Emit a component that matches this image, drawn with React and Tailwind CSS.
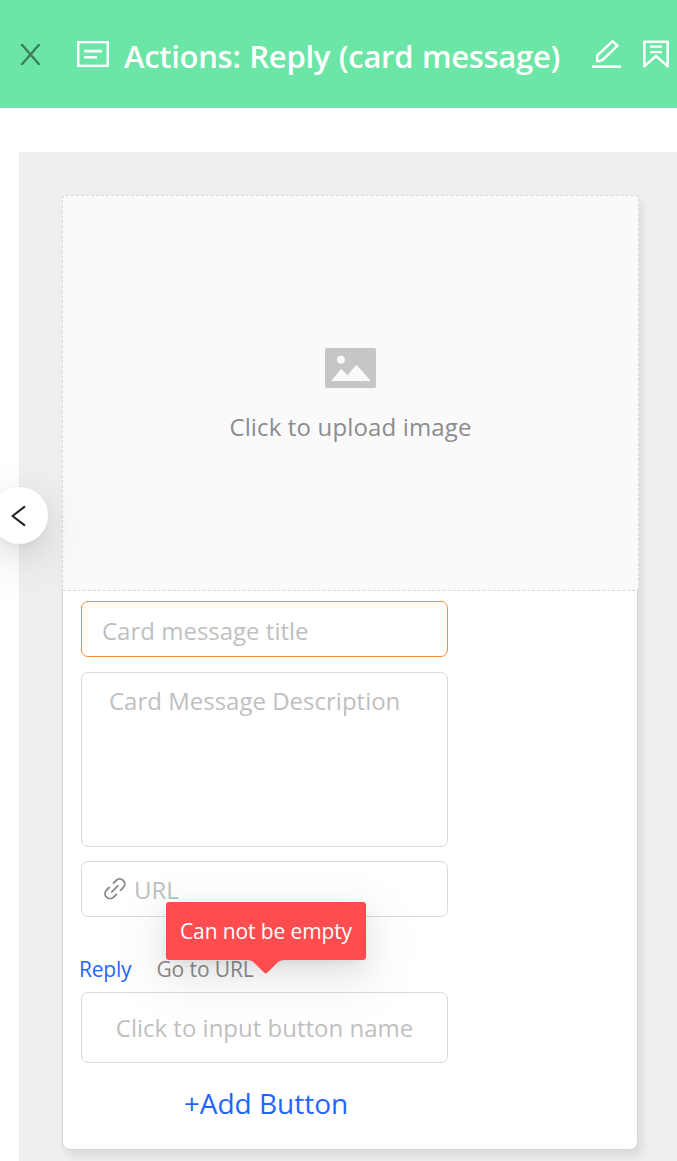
import clsx from 'clsx';

function CardIcon() {
  return (
    <svg className="w-8 h-[26px]" viewBox="0 0 32 26" fill="none" stroke="currentColor">
      <rect x="1.2" y="1.2" width="29.6" height="23.6" strokeWidth="2.4" />
      <path d="M7 10.1h18M7 16.2h13" strokeWidth="2.6" />
    </svg>
  );
}

function EditIcon() {
  return (
    <svg className="w-[30px] h-[30px]" viewBox="0 0 30 30" fill="none" stroke="currentColor">
      <path d="M1 27.6h29" strokeWidth="2.6" />
      <path d="M6.2 22V16.6L21.6 2.2L26.4 6.8L11.6 21L8.6 22Z" strokeWidth="2.5" />
    </svg>
  );
}

function BookmarkIcon() {
  return (
    <svg className="w-[26px] h-7" viewBox="0 0 26 28" fill="none" stroke="currentColor">
      <path d="M1.3 1.8h23.4v24.6L13 16L1.3 26.4Z" strokeWidth="2.5" strokeLinejoin="round" />
      <path d="M7 6.6h12M7 12.2h12" strokeWidth="2.3" />
    </svg>
  );
}

function ImageIcon() {
  return (
    <svg className="w-[51px] h-10" viewBox="0 0 51 40">
      <rect width="51" height="40" rx="1.8" fill="#c6c6c6" />
      <circle cx="16" cy="11.7" r="3.9" fill="#fafafa" />
      <path d="M6.3 33L16.2 20.7L22.4 27.2L31.5 16.7L45 32V33Z" fill="#fafafa" />
    </svg>
  );
}

function LinkIcon() {
  return (
    <svg
      className="w-[22px] h-[22px]"
      viewBox="0 0 22 22"
      fill="none"
      stroke="#8a8a8a"
      strokeWidth="1.9"
      strokeLinecap="round"
    >
      <path d="M9.5 5.1L12.1 2.5A4.8 4.8 0 0 1 19.2 9.6L16.5 12.3" />
      <path d="M5.1 9.5L2.5 12.1A4.8 4.8 0 0 0 9.6 19.2L12.3 16.5" />
      <path d="M7.9 13.8L13.8 7.9" />
    </svg>
  );
}

function Field({ className, children }) {
  return (
    <div
      className={clsx(
        'flex w-[367px] rounded-[7px] border text-[24px] leading-8 text-[#bfbfbf]',
        className
      )}
    >
      {children}
    </div>
  );
}

function Header() {
  return (
    <header className="flex h-[108px] items-center bg-[#6be6a7] pl-5 text-white">
      <svg className="w-[21px] h-[21px] shrink-0" viewBox="0 0 21 21" fill="none" stroke="#3c7d5c">
        <path d="M1.3 0L19.7 21M19.7 0L1.3 21" strokeWidth="2.3" />
      </svg>
      <div className="ml-9 shrink-0">
        <CardIcon />
      </div>
      <h1 className="ml-[15px] w-[436px] shrink-0 whitespace-nowrap pt-[3px] text-[31px] font-semibold leading-10 tracking-[-0.3px] [word-spacing:1px]">
        Actions: Reply (card message)
      </h1>
      <div className="ml-[31px] shrink-0">
        <EditIcon />
      </div>
      <div className="ml-[22px] shrink-0">
        <BookmarkIcon />
      </div>
    </header>
  );
}

function Tooltip() {
  return (
    <div className="absolute left-[85px] top-[41px] flex h-[58px] w-[200px] items-center justify-center rounded-[3px] bg-[#ff4d4f] pb-px shadow-[0_5px_11px_-7px_rgba(0,0,0,0.12),0_10px_28px_0_rgba(0,0,0,0.08),0_16px_50px_14px_rgba(0,0,0,0.05)]">
      <span className="whitespace-nowrap text-[21px] leading-7 tracking-[-0.12px] text-white">
        Can not be empty
      </span>
      <svg className="absolute left-[82px] top-[57px] h-4 w-9" viewBox="0 0 36 16">
        <path d="M0 0H36V1Q32 1 29.5 3.5L20 13Q17.7 15.8 15.4 13L6 3.5Q4 1 0 1Z" fill="#ff4d4f" />
      </svg>
    </div>
  );
}

export default function App() {
  return (
    <div className="relative h-[1161px] w-[677px] overflow-hidden bg-white font-['Open_Sans',sans-serif]">
      <Header />

      <main className="ml-[19px] mt-11 h-[1009px] bg-[#efefef] pl-[43px] pt-[43px]">
        <div className="h-[955px] w-[576px] rounded-lg border border-[#d0d7e0] bg-white shadow-[4px_6px_10px_rgba(0,0,0,0.09)]">
          {/* Image upload */}
          <div className="-ml-px -mt-px flex h-[396px] w-[577px] flex-col items-center rounded-[4px] border border-dashed border-[#d9d9d9] bg-[#fafafa] pt-[152px]">
            <ImageIcon />
            <p className="mt-[23px] whitespace-nowrap text-[24px] leading-8 tracking-[0.15px] text-[#8c8c8c]">
              Click to upload image
            </p>
          </div>

          {/* Card fields */}
          <div className="flex flex-col pl-[18px] pt-[10px]">
            <Field className="h-14 items-center border-[#fa8c35] pl-5 pt-1">
              <span>Card message title</span>
            </Field>
            <Field className="mt-[15px] h-[175px] border-[#d9d9d9] pl-[27px] pt-3">
              <span>Card Message Description</span>
            </Field>
            <div className="relative mt-[14px]">
              <Field className="h-14 items-center border-[#d9d9d9] pl-[22px]">
                <LinkIcon />
                <span className="ml-2 pt-px">URL</span>
              </Field>
              <Tooltip />
            </div>

            {/* Button type */}
            <div className="mt-[37px] flex h-[38px] gap-[25px] text-[21px] leading-[30px]">
              <span className="-ml-0.5 tracking-[-0.2px] text-[#1f66ff]">Reply</span>
              <span className="tracking-[-0.1px] text-[#8c8c8c]">Go to URL</span>
            </div>
            <Field className="h-[71px] items-center justify-center border-[#d9d9d9]">
              <span>Click to input button name</span>
            </Field>
            <button className="mt-[19px] w-[367px] pl-[3px] text-center text-[28px] leading-[42px] text-[#1f66ff]">
              +Add Button
            </button>
          </div>
        </div>
      </main>

      {/* Collapse handle */}
      <button className="absolute left-[-9px] top-[487px] flex h-[57px] w-[57px] items-center rounded-full bg-white pl-5 shadow-[0_5px_11px_-7px_rgba(0,0,0,0.12),0_10px_28px_0_rgba(0,0,0,0.08),0_16px_50px_14px_rgba(0,0,0,0.05)]">
        <svg className="h-[22px] w-[15px]" viewBox="0 0 15 22" fill="none" stroke="#222">
          <path d="M14 1.3L1.6 11L14 20.7" strokeWidth="2.1" />
        </svg>
      </button>
    </div>
  );
}
